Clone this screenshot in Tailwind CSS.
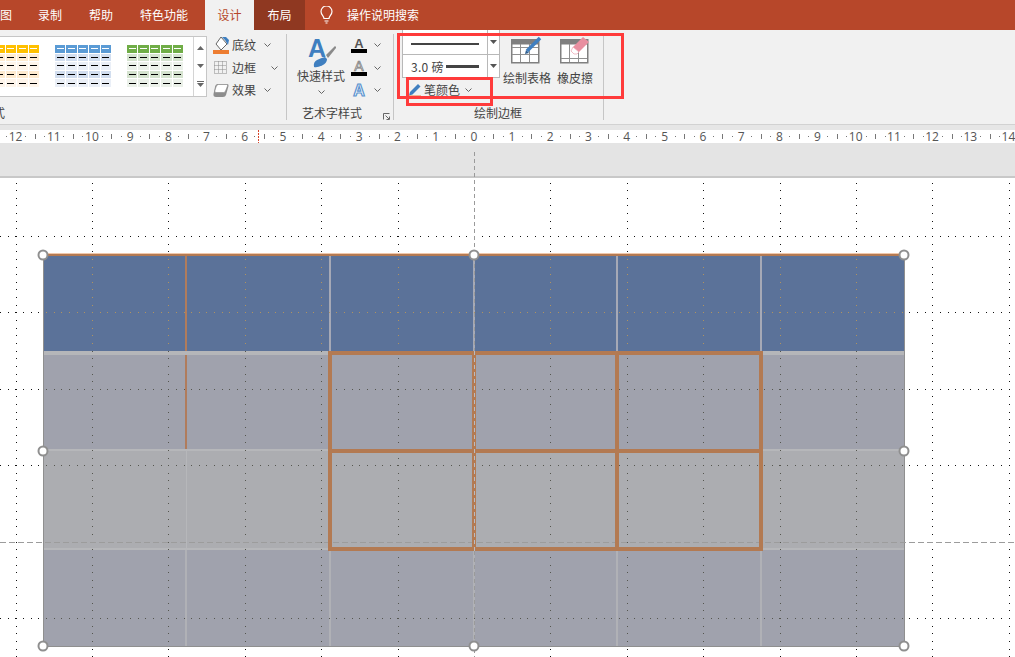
<!DOCTYPE html>
<html lang="zh-CN">
<head>
    <meta charset="UTF-8" />
    <title>设计 - 绘制边框</title>
    <script src="https://cdn.jsdelivr.net/npm/@tailwindcss/browser@4"></script>
</head>
<body class="relative w-[1015px] h-[657px] overflow-hidden bg-white text-[12px] text-[#444] font-['Noto_Sans_CJK_SC','Liberation_Sans',sans-serif]">

    <!-- tabs -->
    <nav class="flex items-center h-[30px] bg-[#b7472a] text-white">
        <a class="w-[38px] -ml-0">图</a>
        <a class="w-[51px]">录制</a>
        <a class="w-[51px]">帮助</a>
        <a class="w-[65px]">特色功能</a>
        <a class="flex items-center justify-center w-[49px] h-[30px] bg-[#f1f1f1] text-[#b7472a]">设计</a>
        <a class="flex items-center justify-center w-[51px] h-[30px] bg-[#8f3821]">布局</a>
        <svg class="ml-[15px] mr-[14px]" width="13" height="18" viewBox="0 0 13 18" fill="none" stroke="#fff" stroke-width="1.2">
            <path d="M4 12.500c0-2.500-3-3.500-3-7a5.500 5.500 0 0 1 11 0c0 3.500-3 4.500-3 7z" />
            <path d="M4.500 15h4M5.500 17h2" />
        </svg>
        <a>操作说明搜索</a>
    </nav>

    <!-- ribbon -->
    <section class="flex items-start h-[95px] bg-[#f1f1f1] border-b border-[#d2d2d2]">

        <!-- table styles group -->
        <div class="flex flex-col w-[286px] h-[93px] pt-[4px] overflow-hidden">
            <div class="flex items-start">
                <div class="flex items-stretch w-[207px] h-[61px] mt-[2px] bg-white border border-l-0 border-[#c6c6c6] overflow-hidden">
                    <div id="gallery" class="flex flex-1 gap-[16px] -ml-[17px] pt-[8px]"></div>
                    <div class="flex flex-col items-center justify-between w-[13px] py-[9px] border-l border-[#d4d4d4]">
                        <svg width="7" height="4"><path d="M3.500 0 7 4H0z" fill="#666" /></svg>
                        <svg width="7" height="4"><path d="M3.500 4 7 0H0z" fill="#666" /></svg>
                        <svg width="7" height="6"><path d="M0 0h7v1H0zM3.500 6 7 2H0z" fill="#666" /></svg>
                    </div>
                </div>
                <div class="flex flex-col ml-[6px]">
                    <div class="flex items-center h-[22.500px]">
                        <svg width="17" height="18" viewBox="0 0 17 18">
                            <path d="M8 1 3 8l5 6 6-6z" fill="#fff" stroke="#666" />
                            <path d="M9 1h4l3 3-1 5-3-5z" fill="#3f7fc0" />
                            <rect x="0" y="14" width="16" height="4" fill="#ed7d31" />
                        </svg>
                        <span class="ml-[2px]">底纹</span>
                        <svg class="ml-[8px]" width="7" height="4" fill="none" stroke="#666"><path d="m.5.5 3 3 3-3" /></svg>
                    </div>
                    <div class="flex items-center h-[22.500px]">
                        <svg width="17" height="14" viewBox="0 0 17 14" fill="none" stroke="#888" stroke-dasharray="1 1">
                            <rect x="1.500" y=".5" width="12" height="12" />
                            <path d="M5.500 .5v12M9.500 .5v12M1.500 4.500h12M1.500 8.500h12" />
                        </svg>
                        <span class="ml-[2px]">边框</span>
                        <svg class="ml-[15px]" width="7" height="4" fill="none" stroke="#666"><path d="m.5.5 3 3 3-3" /></svg>
                    </div>
                    <div class="flex items-center h-[22.500px]">
                        <svg width="17" height="15" viewBox="0 0 17 15">
                            <path d="M5 1h9q2 0 1.500 2L13 12q-.5 2-3 2H3q-3 0-2.500-3L2 4q.5-3 3-3z" fill="#8d8d8d" />
                            <path d="M5.500 1.500h8q1.500 0 1 1.500L12.500 8q-.5 1.500-2 1.500H3q-1.500 0-1.200-1.500L3 4q.5-2.500 2.500-2.500z" fill="#fff" stroke="#888" stroke-width=".6" />
                        </svg>
                        <span class="ml-[2px]">效果</span>
                        <svg class="ml-[8px]" width="7" height="4" fill="none" stroke="#666"><path d="m.5.5 3 3 3-3" /></svg>
                    </div>
                </div>
            </div>
            <div class="mt-auto -ml-[19px] pb-[1px]">样式</div>
        </div>
        <div class="w-px h-[86px] mt-[4px] bg-[#c6c6c6]"></div>

        <!-- wordart group -->
        <div class="relative flex flex-col w-[106px] h-[93px] pt-[7px]">
            <div class="flex items-start">
                <div class="flex flex-col items-center w-[48px] ml-[10px]">
                    <svg width="30" height="31" viewBox="0 0 30 31">
                        <text x="2" y="20" font-family="Liberation Sans" font-weight="700" font-size="25" fill="#3f7fc0">A</text>
                        <path d="m20 18 9-9 1.500 1.500L22 21z" fill="#8a8a8a" />
                        <path d="M8 30q-1-5 3-7t8-3l2 2q0 4-5 6.500T8 30z" fill="#3f7fc0" />
                    </svg>
                    <span class="-mt-[1px]">快速样式</span>
                    <svg class="mt-[5px]" width="7" height="4" fill="none" stroke="#666"><path d="m.5.5 3 3 3-3" /></svg>
                </div>
                <div class="flex flex-col ml-[6px] -mt-[3px]">
                    <div class="flex items-center h-[22.500px]">
                        <div class="flex flex-col items-center w-[16px]">
                            <span class="h-[11px] text-[13px] leading-[11px] font-bold text-[#555] font-['Liberation_Sans',sans-serif]">A</span>
                            <span class="w-[16px] h-[4px] bg-black"></span>
                        </div>
                        <svg class="ml-[7px]" width="7" height="4" fill="none" stroke="#666"><path d="m.5.5 3 3 3-3" /></svg>
                    </div>
                    <div class="flex items-center h-[22.500px]">
                        <div class="flex flex-col items-center w-[16px]">
                            <svg width="16" height="12"><text x="8" y="11" text-anchor="middle" font-family="Liberation Sans" font-size="14" fill="#fff" stroke="#777" stroke-width=".7">A</text></svg>
                            <span class="w-[16px] h-[4px] bg-black"></span>
                        </div>
                        <svg class="ml-[7px]" width="7" height="4" fill="none" stroke="#666"><path d="m.5.5 3 3 3-3" /></svg>
                    </div>
                    <div class="flex items-center h-[22.500px]">
                        <svg width="16" height="16"><text x="8" y="14" text-anchor="middle" font-family="Liberation Sans" font-weight="700" font-size="16" fill="#fff" stroke="#5b93cf" stroke-width="1.200">A</text></svg>
                        <svg class="ml-[7px]" width="7" height="4" fill="none" stroke="#666"><path d="m.5.5 3 3 3-3" /></svg>
                    </div>
                </div>
            </div>
            <div class="mt-auto pl-[15px] pb-[1px]">艺术字样式</div>
            <svg class="absolute left-[96px] bottom-[3px]" width="7" height="7" fill="none" stroke="#666"><path d="M.5 6.500v-6h6M2.500 2.500l3.500 3.500M6.500 3.500v3h-3" /></svg>
        </div>
        <div class="w-px h-[86px] mt-[4px] bg-[#c6c6c6]"></div>

        <!-- draw borders group -->
        <div class="flex flex-col w-[209px] h-[93px]">
            <div class="flex items-start">
                <div class="flex flex-col ml-[8px]">
                    <div class="flex w-[98px] h-[25px] border border-t-0 border-[#b8b8b8] bg-white">
                        <div class="flex flex-1 items-center pl-[8px] pt-[3px]"><span class="w-[68px] h-[2px] bg-[#444]"></span></div>
                        <div class="flex items-center justify-center w-[12px] border-l border-[#b8b8b8]"><svg width="7" height="4"><path d="M3.500 4 7 0H0z" fill="#555" /></svg></div>
                    </div>
                    <div class="flex w-[98px] h-[23px] border border-t-0 border-[#b8b8b8] bg-white">
                        <div class="flex flex-1 items-center pl-[8px] pt-[1px]">
                            <span class="w-[35px] whitespace-nowrap tracking-[.3px]">3.0 磅</span>
                            <span class="w-[33px] h-[3px] bg-[#444]"></span>
                        </div>
                        <div class="flex items-center justify-center w-[12px] border-l border-[#b8b8b8]"><svg width="7" height="4"><path d="M3.500 4 7 0H0z" fill="#555" /></svg></div>
                    </div>
                    <div class="flex items-center h-[24px] ml-[6px]">
                        <svg width="14" height="16" viewBox="0 0 14 16">
                            <path d="m2 10 8-8 2.500 2.500-8 8L1 13.500z" fill="#3f7fc0" />
                            <rect x="0" y="13.500" width="13" height="2.500" fill="#ed7d31" />
                        </svg>
                        <span class="ml-[2px]">笔颜色</span>
                        <svg class="ml-[5px]" width="7" height="4" fill="none" stroke="#666"><path d="m.5.5 3 3 3-3" /></svg>
                    </div>
                </div>
                <div class="flex flex-col items-center w-[48px] ml-[3px] pt-[6px]">
                    <svg width="32" height="28" viewBox="0 0 32 28" fill="none">
                        <rect x=".75" y="3.750" width="27" height="23" fill="#fff" stroke="#808080" stroke-width="1.500" />
                        <rect x=".5" y="3.500" width="27.500" height="5" fill="#7f7f7f" />
                        <path d="M9.500 8v18M18.500 8v18M1 11.500h26M1 18.500h26" stroke="#909090" />
                        <path d="m16 15 13-13" stroke="#3f7fc0" stroke-width="3.500" />
                        <path d="m14 18 1-4 3 3z" fill="#2f5f90" />
                    </svg>
                    <span class="mt-[5px] whitespace-nowrap">绘制表格</span>
                </div>
                <div class="flex flex-col items-center w-[36px] ml-[6px] pt-[6px]">
                    <svg width="30" height="28" viewBox="0 0 30 28" fill="none">
                        <rect x=".75" y="3.750" width="27" height="23" fill="#fff" stroke="#808080" stroke-width="1.500" />
                        <rect x=".5" y="3.500" width="27.500" height="5" fill="#7f7f7f" />
                        <path d="M9.500 8v18M18.500 8v18M1 22.500h26" stroke="#909090" />
                        <path d="m13 11 10-10 6 5-10 10z" fill="#e88fa0" />
                        <path d="m13 11 6 5-2 2h-3l-3-3z" fill="#fff" stroke="#e88fa0" stroke-width=".6" />
                    </svg>
                    <span class="mt-[5px] whitespace-nowrap">橡皮擦</span>
                </div>
            </div>
            <div class="mt-auto pl-[80px] pb-[1px]">绘制边框</div>
        </div>
        <div class="w-px h-[86px] mt-[4px] bg-[#c6c6c6]"></div>
    </section>

    <!-- ruler -->
    <div class="h-[5px] bg-[#e6e6e6]"></div>
    <div class="relative h-[13px] bg-white overflow-hidden">
        <div id="ruler-labels" class="flex -ml-[3.500px] text-[12px] leading-[13px] text-[#555] font-['Open_Sans',sans-serif]"></div>
        <svg id="ruler-ticks" class="absolute inset-0" width="1015" height="13" shape-rendering="crispEdges"></svg>
    </div>

    <!-- slide area -->
    <main class="relative h-[514px] overflow-hidden">
        <div class="h-[35px] bg-[#e4e4e4] border-b-2 border-[#c8c8c8]"></div>

        <!-- table -->
        <div class="absolute left-[43px] top-[111px] w-[862px] h-[393px] flex flex-col border-x border-b border-[#8f8f8f] border-t-2 border-t-[#b47a52] shadow-[0_-1px_0_#f0c8ac]">
            <div class="grid grid-cols-[143px_144px_144px_143px_144px_1fr] h-[99px] bg-[#5b7299] border-b-4 border-[#b5b6b9]">
                <div class="border-r-2 border-[#b07c5c]"></div>
                <div class="border-r-2 border-[#a6a9b6]"></div>
                <div class="border-r-2 border-[#a6a9b6]"></div>
                <div class="border-r-2 border-[#a6a9b6]"></div>
                <div class="border-r-2 border-[#a6a9b6]"></div>
                <div></div>
            </div>
            <div class="grid grid-cols-[143px_144px_144px_143px_144px_1fr] h-[94px] bg-[#a0a2ad]">
                <div class="border-r-2 border-[#b07c5c]"></div>
                <div></div><div></div><div></div><div></div><div></div>
            </div>
            <div class="grid grid-cols-[143px_144px_144px_143px_144px_1fr] h-[101px] bg-[#acadb1] border-t-2 border-b-2 border-[#b6b7ba]">
                <div class="border-r border-[#b6b7ba]"></div>
                <div></div><div></div><div></div><div></div><div></div>
            </div>
            <div class="grid grid-cols-[143px_144px_144px_143px_144px_1fr] flex-1 bg-[#a0a2ad]">
                <div class="border-r-2 border-[#b0b1b6]"></div>
                <div class="border-r-2 border-[#b0b1b6]"></div>
                <div class="border-r-2 border-[#b0b1b6]"></div>
                <div class="border-r-2 border-[#b0b1b6]"></div>
                <div class="border-r-2 border-[#b0b1b6]"></div>
                <div></div>
            </div>
        </div>

        <!-- gridlines and guides -->
        <svg id="guides" class="absolute inset-0" width="1015" height="514" viewBox="0 143 1015 514" shape-rendering="crispEdges"></svg>

        <!-- pen-drawn cells -->
        <div class="absolute left-[328px] top-[208px] w-[435px] h-[200px] grid grid-cols-[144px_143px_1fr] grid-rows-[98px_1fr] border-4 border-[#b37a52]">
            <div class="border-r-4 border-b-4 border-[#b37a52]"></div>
            <div class="border-r-4 border-b-4 border-[#b37a52]"></div>
            <div class="border-b-4 border-[#b37a52]"></div>
            <div class="border-r-4 border-[#b37a52]"></div>
            <div class="border-r-4 border-[#b37a52]"></div>
            <div></div>
        </div>
        <svg class="absolute left-[474px] top-[208px]" width="1" height="200"><path d="M.5 0v200" stroke="#b9bbc2" stroke-dasharray="4 3" /></svg>

        <!-- selection handles -->
        <div class="absolute left-[43px] top-[112px] w-[861px] h-[391px]">
            <span class="absolute left-0 top-0 size-[11px] -translate-x-1/2 -translate-y-1/2 rounded-full border-2 border-[#8f8f8f] bg-white"></span>
            <span class="absolute left-1/2 top-0 size-[11px] -translate-x-1/2 -translate-y-1/2 rounded-full border-2 border-[#8f8f8f] bg-white"></span>
            <span class="absolute left-full top-0 size-[11px] -translate-x-1/2 -translate-y-1/2 rounded-full border-2 border-[#8f8f8f] bg-white"></span>
            <span class="absolute left-0 top-1/2 size-[11px] -translate-x-1/2 -translate-y-1/2 rounded-full border-2 border-[#8f8f8f] bg-white"></span>
            <span class="absolute left-full top-1/2 size-[11px] -translate-x-1/2 -translate-y-1/2 rounded-full border-2 border-[#8f8f8f] bg-white"></span>
            <span class="absolute left-0 top-full size-[11px] -translate-x-1/2 -translate-y-1/2 rounded-full border-2 border-[#8f8f8f] bg-white"></span>
            <span class="absolute left-1/2 top-full size-[11px] -translate-x-1/2 -translate-y-1/2 rounded-full border-2 border-[#8f8f8f] bg-white"></span>
            <span class="absolute left-full top-full size-[11px] -translate-x-1/2 -translate-y-1/2 rounded-full border-2 border-[#8f8f8f] bg-white"></span>
        </div>
    </main>

    <!-- red annotation boxes -->
    <div class="absolute left-[397px] top-[33px] w-[227px] h-[66px] border-[3px] border-[#ff3b3b]"></div>
    <div class="absolute left-[406px] top-[77px] w-[87px] h-[29px] border-[3px] border-[#ff3b3b]"></div>

    <script>
        "use strict";

        // gallery thumbnails
        const thumbs = [
            { head: "bg-[#ffc000]", odd: "bg-[#ffebd0]", even: "bg-[#fff5ea]" },
            { head: "bg-[#5b9bd5]", odd: "bg-[#d2deef]", even: "bg-[#eaeff7]" },
            { head: "bg-[#70ad47]", odd: "bg-[#d5e3cf]", even: "bg-[#ebf1e9]" },
        ];
        document.getElementById("gallery").innerHTML = thumbs.map(t => {
            let cells = "";
            for (let r = 0; r < 5; r++) {
                const bg = r === 0 ? t.head : (r % 2 ? t.odd : t.even);
                const dash = r === 0 ? "bg-white" : "bg-black";
                for (let c = 0; c < 5; c++) {
                    cells += `<div class="flex items-center justify-center ${bg}"><span class="w-[7px] h-px ${dash}"></span></div>`;
                }
            }
            return `<div class="grid grid-cols-5 grid-rows-5 gap-px shrink-0 w-[56px] h-[42px]">${cells}</div>`;
        }).join("");

        // ruler, 38.2px per unit, centred on x=474
        const unit = 38.2;
        const labels = [];
        for (let n = -12; n <= 14; n++) {
            labels.push(`<span class="shrink-0 w-[38.200px] text-center">${Math.abs(n)}</span>`);
        }
        document.getElementById("ruler-labels").innerHTML = labels.join("");

        let ticks = "";
        for (let k = -50; k <= 57; k++) {
            const x = Math.round(474 + k * unit / 4);
            if (k % 4 === 0) continue;
            ticks += k % 2 === 0
                ? `<rect x="${x}" y="4" width="1" height="5" fill="#777" />`
                : `<rect x="${x}" y="6" width="1" height="1" fill="#777" />`;
        }
        ticks += `<path d="M258.500 0v13" stroke="#d8442a" stroke-dasharray="2 1" />`;
        document.getElementById("ruler-ticks").innerHTML = ticks;

        // slide gridlines: vertical every 76.4px, horizontal every 76.4px, dots 7.64px apart
        const step = 7.64;
        const colorAt = (x, y) => {
            if (x > 43 && x < 904 && y > 255 && y < 350) return "#b0935f";
            if (x > 43 && x < 904 && y > 350 && y < 646) return "#55564f";
            return "#111";
        };
        let dots = "";
        for (let i = 0; i < 14; i++) {
            if (i === 6) continue;
            const x = Math.round(15.5 + i * 76.4);
            for (let k = -7; k <= 56; k++) {
                const y = Math.round(236 + k * step);
                dots += `<rect x="${x}" y="${y}" width="1" height="1" fill="${colorAt(x, y)}" />`;
            }
        }
        [236, 312.4, 388.8, 465.2, 618].forEach(gy => {
            const y = Math.round(gy);
            for (let k = 0; k < 134; k++) {
                const x = Math.round(0.2 + k * step);
                dots += `<rect x="${x}" y="${y}" width="1" height="1" fill="${colorAt(x, y)}" />`;
            }
        });
        dots += `<path d="M0 542.500h1015" stroke="#9c9c9c" stroke-dasharray="6 3" />`;
        dots += `<path d="M474.500 152V657" stroke="#9a9a9a" stroke-dasharray="4 3" />`;
        document.getElementById("guides").innerHTML = dots;
    </script>
</body>
</html>
